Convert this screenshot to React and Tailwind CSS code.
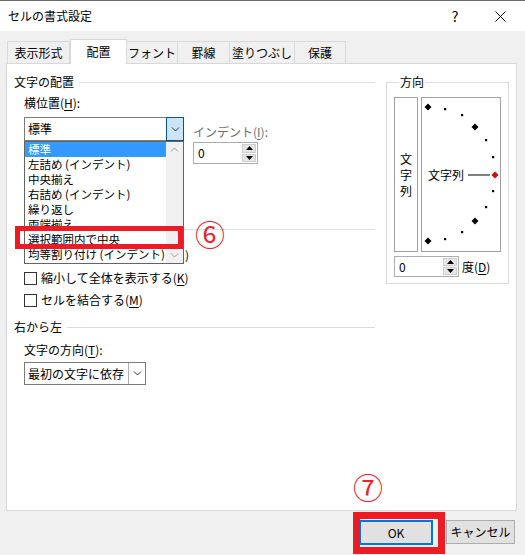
import React from 'react';

const U = ({ children }) => <span className="underline underline-offset-2">{children}</span>;

const Chevron = ({ up, color = '#333' }) => (
  <svg width="9" height="5" viewBox="0 0 9 5">
    <polyline points={up ? '1,4.5 4.5,1 8,4.5' : '1,0.5 4.5,4 8,0.5'} fill="none" stroke={color} strokeWidth="1" />
  </svg>
);

const GroupHeader = ({ label }) => (
  <div className="flex items-center h-[16px] leading-[16px]">
    <span>{label}</span>
    <div className="ml-[5px] flex-1 h-px bg-[#dcdcdc]" />
  </div>
);

const Combo = ({ text, width, open }) => (
  <div className={`flex h-[24px] bg-white border border-[#7a7a7a] ${width}`}>
    <div className="flex-1 pl-[3px] flex items-center">{text}</div>
    <div
      className={`w-[17px] flex items-center justify-center ${
        open ? 'bg-[#cce4f7] border border-[#005499] -my-px -mr-px w-[18px]' : 'border-l border-[#d9d9d9] bg-white'
      }`}
    >
      <Chevron />
    </div>
  </div>
);

const Spin = ({ width, height }) => (
  <div className={`flex bg-white border border-[#adadad] ${width} ${height}`}>
    <div className="flex-1 pl-[4px] flex items-center">0</div>
    <div className="w-[16px] flex flex-col gap-px p-px bg-white">
      <div className="flex-1 bg-[#e5e5e5] border border-[#cfcfcf] flex items-center justify-center">
        <svg width="7" height="4" viewBox="0 0 7 4"><polygon points="0,4 3.5,0 7,4" fill="#000" /></svg>
      </div>
      <div className="flex-1 bg-[#e5e5e5] border border-[#cfcfcf] flex items-center justify-center">
        <svg width="7" height="4" viewBox="0 0 7 4"><polygon points="0,0 3.5,4 7,0" fill="#000" /></svg>
      </div>
    </div>
  </div>
);

const CheckRow = ({ children, className }) => (
  <div className={`flex items-center h-[16px] pl-[10px] ${className}`}>
    <div className="w-[13px] h-[13px] border border-[#333] bg-white" />
    <span className="ml-[4px] leading-[16px]">{children}</span>
  </div>
);

const Diamond = ({ x, y, fill = '#000' }) => (
  <polygon points={`${x},${y - 3.5} ${x + 3.5},${y} ${x},${y + 3.5} ${x - 3.5},${y}`} fill={fill} />
);

const Dot = ({ x, y }) => <rect x={x - 1} y={y - 1} width="2.2" height="2.2" fill="#000" />;

const tabs = [
  { label: '表示形式', w: 'w-[63px]' },
  { label: '配置', w: 'w-[57px]', active: true },
  { label: 'フォント', w: 'w-[52px]' },
  { label: '罫線', w: 'w-[53px]' },
  { label: '塗りつぶし', w: 'w-[66px]' },
  { label: '保護', w: 'w-[52px]' },
];

const listItems = [
  '標準',
  '左詰め (インデント)',
  '中央揃え',
  '右詰め (インデント)',
  '繰り返し',
  '両端揃え',
  '選択範囲内で中央',
  '均等割り付け (インデント)',
];

export default function App() {
  return (
    <div className="relative w-[525px] h-[555px] overflow-hidden bg-[#f0f0f0] border-t border-[#6b6b6b] text-[12px] text-[#000] font-['Noto_Sans_CJK_JP','Noto_Sans',sans-serif]">
      {/* title bar */}
      <div className="h-[30px] bg-white flex items-center pl-[8px]">
        <span>セルの書式設定</span>
        <div className="ml-auto flex items-center pr-[2px]">
          <span className="w-[46px] text-center text-[14px]">?</span>
          <span className="w-[45px] flex justify-center">
            <svg width="11" height="11" viewBox="0 0 11 11">
              <path d="M0.5 0.5 L10.5 10.5 M10.5 0.5 L0.5 10.5" stroke="#000" strokeWidth="1" />
            </svg>
          </span>
        </div>
      </div>

      {/* tabs */}
      <div className="relative z-10 h-[33px] -mb-px flex items-end pl-[7px]">
        {tabs.map((t) =>
          t.active ? (
            <div key={t.label} className={`${t.w} h-[25px] bg-white border border-b-0 border-[#d9d9d9] flex items-center justify-center`}>
              {t.label}
            </div>
          ) : (
            <div key={t.label} className={`${t.w} h-[22px] mb-px bg-[#f0f0f0] border border-b-0 border-[#d9d9d9] -ml-px first:ml-0 flex items-center justify-center`}>
              {t.label}
            </div>
          )
        )}
      </div>

      {/* panel */}
      <div className="ml-[6px] w-[511px] h-[448px] bg-white border border-[#d9d9d9] flex items-start pt-[10px]">
        <div className="w-[368px] pl-[7px]">
          <GroupHeader label="文字の配置" />
          <div className="mt-[5px] pl-[10px] leading-[16px]">
            横位置(<U>H</U>):
          </div>
          <div className="mt-[6px] pl-[10px] flex items-start">
            <Combo text="標準" width="w-[160px]" open />
            <div className="ml-[9px]">
              <div className="mt-[7px] leading-[16px] text-[#6d6d6d]">
                インデント(<U>I</U>):
              </div>
              <div className="mt-[2px]">
                <Spin width="w-[65px]" height="h-[22px]" />
              </div>
            </div>
          </div>
          <div className="mt-[65px] ml-[170px] h-px bg-[#dcdcdc]" />
          <CheckRow className="mt-[40px]">
            縮小して全体を表示する(<U>K</U>)
          </CheckRow>
          <CheckRow className="mt-[6px]">
            セルを結合する(<U>M</U>)
          </CheckRow>
          <div className="mt-[11px]">
            <GroupHeader label="右から左" />
          </div>
          <div className="mt-[7px] pl-[10px] leading-[16px]">
            文字の方向(<U>T</U>):
          </div>
          <div className="mt-[4px] pl-[10px]">
            <div className="flex h-[23px] w-[122px] bg-white border border-[#7a7a7a]">
              <div className="flex-1 pl-[3px] flex items-center">最初の文字に依存</div>
              <div className="w-[17px] border-l border-[#adadad] bg-white flex items-center justify-center">
                <Chevron />
              </div>
            </div>
          </div>
        </div>

        <fieldset className="ml-[11px] w-[123px] border border-[#dcdcdc] pl-[7px] pb-[6px]">
          <legend className="ml-[5px] px-[1px] leading-[16px]">方向</legend>
          <div className="mt-[7px] flex">
            <div className="w-[24px] h-[155px] border border-[#a0a0a0] flex flex-col items-center justify-center leading-[16px]">
              <span>文</span>
              <span>字</span>
              <span>列</span>
            </div>
            <div className="relative ml-[3px] w-[80px] h-[155px] border border-[#a0a0a0]">
              <svg className="absolute -left-px -top-px" width="80" height="155" viewBox="0 0 80 155">
                <Diamond x={7} y={10} />
                <Dot x={24} y={12} />
                <Dot x={41} y={18} />
                <Diamond x={54} y={30} />
                <Dot x={65} y={43} />
                <Dot x={72} y={60} />
                <line x1="47" y1="78" x2="69" y2="78" stroke="#000" strokeWidth="1" />
                <Diamond x={74} y={78} fill="#e00000" />
                <Dot x={72} y={94} />
                <Dot x={65} y={110} />
                <Diamond x={54} y={124} />
                <Dot x={41} y={135} />
                <Dot x={24} y={142} />
                <Diamond x={7} y={144} />
              </svg>
              <span className="absolute left-[6px] top-[69px] leading-[16px]">文字列</span>
            </div>
          </div>
          <div className="mt-[4px] flex items-center">
            <Spin width="w-[65px]" height="h-[21px]" />
            <span className="ml-[3px]">
              度(<U>D</U>)
            </span>
          </div>
        </fieldset>
      </div>

      {/* buttons */}
      <div className="mt-[9px] flex justify-end pr-[10px] gap-[13px]">
        <div className="w-[74px] h-[25px] bg-[#e1e1e1] border-2 border-[#0078d7] flex items-center justify-center">
          OK
        </div>
        <div className="w-[69px] h-[24px] bg-[#e1e1e1] border border-[#adadad] flex items-center justify-center">
          キャンセル
        </div>
      </div>

      {/* open dropdown list */}
      <div className="absolute left-[24px] top-[140px] w-[160px] h-[123px] bg-white border border-[#646464] flex">
        <div className="flex-1 flex flex-col">
          {listItems.map((item, i) => (
            <div
              key={item}
              className={`h-[15px] leading-[15px] text-[11.5px] pl-[3px] whitespace-nowrap overflow-hidden ${
                i === 0 ? 'bg-[#3399ff] text-white outline-1 outline-dotted outline-[#c08040] -outline-offset-1' : ''
              }`}
            >
              {item}
            </div>
          ))}
        </div>
        <div className="w-[17px] bg-[#f0f0f0] flex flex-col justify-between items-center py-[5px]">
          <Chevron up color="#a0a0a0" />
          <Chevron color="#a0a0a0" />
        </div>
      </div>
      <span className="absolute left-[185px] top-[246px] leading-[16px]">)</span>

      {/* annotations */}
      <div className="absolute left-[15px] top-[225px] w-[168px] h-[23px] border-[5px] border-[#ed1c24]" />
      <span className="absolute left-[195px] top-[214px] text-[30px] leading-[36px] text-[#e8242c]">⑥</span>
      <div className="absolute left-[353px] top-[511px] w-[92px] h-[42px] border-[7px] border-[#ed1c24]" />
      <span className="absolute left-[353px] top-[467px] text-[30px] leading-[36px] text-[#e8242c]">⑦</span>
    </div>
  );
}
